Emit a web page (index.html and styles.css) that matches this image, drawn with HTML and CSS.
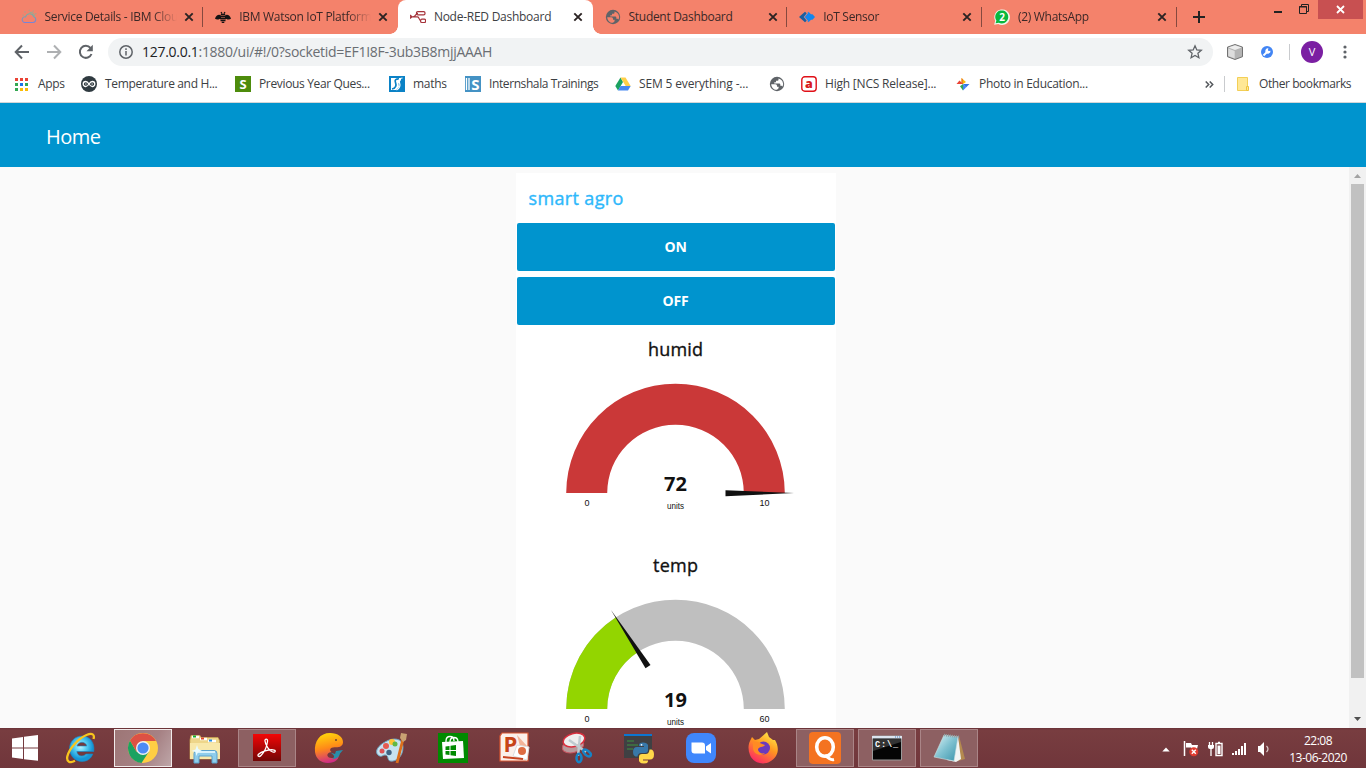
FILE: index.html
```html
<!DOCTYPE html>
<html lang="en">
<head>
<meta charset="utf-8">
<title>Node-RED Dashboard</title>
<link rel="stylesheet" href="styles.css">
</head>
<body>
<svg class="defs" width="0" height="0">
  <defs>
    <symbol id="x" viewBox="0 0 10 10"><path d="M1.3 1.3l7.4 7.4M8.7 1.3L1.3 8.700" stroke="currentColor" stroke-width="1.9" fill="none"/></symbol>
    <symbol id="globe" viewBox="0 0 16 16"><circle cx="8" cy="8" r="7.2" fill="#5f6368"/><path d="M2.200 8.300h4.300q1.500 0 1.500 1.500v1h1.600v1.400l-1.600 1.500q-1.200.3-2.500-.2C3.500 12.500 2.200 10.500 2.200 8.300zM9.500 2.400v1.400q0 1-1 1H7v1.500H5.300v1.200h5q1 0 1 1v1.300h1.300l1 .7q1.200-3-.3-5.500-1.300-2.100-3.800-2.600z" fill="var(--hole)"/></symbol>
  </defs>
</svg>
<div class="screen">
  <div class="tabs">
    <div class="tab">
      <svg class="fav" viewBox="0 0 16 16" fill="none" stroke-width="1.1"><defs><linearGradient id="cl" x1="0" y1="0" x2="0" y2="1"><stop offset="0" stop-color="#7bb09d"/><stop offset="1" stop-color="#7883d6"/></linearGradient></defs><path d="M3.500 13.500h8.500a3 3 0 0 0 .8-5.800A4.300 4.300 0 0 0 4.600 7.900a2.800 2.800 0 0 0-1.100 5.600z" stroke="url(#cl)"/><path d="M8.500 3.500a4 4 0 0 1 5 4.500M8 .8l.4 1.400M3.500 2.500l1 1M12.500 1.500l-.7 1.200M15.400 4.500l-1.300.6M1.500 6l1.400.2" stroke="#a3a58c"/></svg>
      <span class="title t1">Service Details - IBM Clou</span><svg class="close"><use href="#x"/></svg>
    </div>
    <div class="tab">
      <svg class="fav" viewBox="0 0 16 16"><path d="M6 6.800C4.500 4.800 1 6 0 9.800c1.800 1.200 4.800.8 6-.8zM10 6.800c1.500-2 5-.8 6 3-1.800 1.200-4.800.8-6-.8z" fill="#151313"/><path d="M6 3l1 1.500M10 3L9 4.500M5.800 5.500h4.400M5.200 7.500h5.600M5 9.500h6M5.500 11.500h5M6.700 13.300h2.600" stroke="#151313" stroke-width="1.300"/></svg>
      <span class="title t2">IBM Watson IoT Platform</span><svg class="close"><use href="#x"/></svg>
    </div>
    <div class="tab active">
      <svg class="fav" viewBox="0 0 16 16" fill="none" stroke="#a6323a" stroke-width="1.200"><path d="M0 7.800h3c3 0 2.500-3.500 5-3.500M0 6l2 1.800L0 9.600M3 7.800h4.500c2 0 1.500 4.100 3.500 4.100"/><rect x="6.500" y="2.600" width="8.500" height="3.300" rx="1.300"/><rect x="10.600" y="10.200" width="5" height="3.300" rx="1.300"/></svg>
      <span class="title t3">Node-RED Dashboard</span><svg class="close"><use href="#x"/></svg>
    </div>
    <div class="tab">
      <svg class="fav hole-tab"><use href="#globe"/></svg>
      <span class="title t4">Student Dashboard</span><svg class="close"><use href="#x"/></svg>
    </div>
    <div class="tab">
      <svg class="fav" viewBox="0 0 16 16"><path d="M0 8l6-5.300 1.700 1.600L5 8l2.700 3.700L6 13.300z" fill="#1d5e9e"/><path d="M9.500 2.700l2.500 2.500h1.500L16 8l-2.500 2.800H12l-2.500 2.500L4.500 8z" fill="#1386ee"/><path d="M9 3.800L5.300 8 9 12.200" stroke="#f4826b" stroke-width=".8" fill="none"/></svg>
      <span class="title t5">IoT Sensor</span><svg class="close"><use href="#x"/></svg>
    </div>
    <div class="tab">
      <svg class="fav" viewBox="0 0 16 16"><path d="M.2 15.800l1-4A7.800 7.800 0 1 1 4.300 15z" fill="#eef8ee"/><path d="M1.600 14.300l.8-2.700A6.500 6.500 0 1 1 4.800 13.700z" fill="#08b83d"/><text x="8" y="11.700" class="glyph" font-size="10" fill="#fff">2</text></svg>
      <span class="title t6">(2) WhatsApp</span><svg class="close"><use href="#x"/></svg>
    </div>
    <svg class="plus" viewBox="0 0 12 12"><path d="M6 0v12M0 6h12" stroke="#232323" stroke-width="2"/></svg>
    <div class="window-controls">
      <svg width="8" height="13"><path d="M0 12h8" stroke="#222" stroke-width="2"/></svg>
      <svg width="10" height="10" fill="none" stroke="#222"><path d="M.5 2.500h7v7h-7zM0 3h8M2.500 2V.5h7v7H8"/></svg>
      <div class="window-close"><svg width="9" height="9"><path d="M1 1l7 7M8 1L1 8" stroke="#fff" stroke-width="1.800"/></svg></div>
    </div>
  </div>

  <div class="toolbar">
    <svg class="nav" viewBox="0 0 16 16"><path d="M15 8H2M8 1.500L1.700 8 8 14.500" class="line"/></svg>
    <svg class="nav dim" viewBox="0 0 16 16"><path d="M1 8h13M8 1.500L14.300 8 8 14.500" class="line"/></svg>
    <svg class="nav" viewBox="0 0 16 16"><path d="M13.500 10A6 6 0 1 1 12.500 4" class="line"/><path d="M14.800.8v6.400H8.500z" fill="#5f6368"/></svg>
    <div class="omnibox">
      <svg width="14" height="14" viewBox="0 0 14 14"><circle cx="7" cy="7" r="6.200" fill="none" stroke="#5f6368" stroke-width="1.500"/><path d="M7 6v4.500M7 3.300v1.600" stroke="#5f6368" stroke-width="1.500"/></svg>
      <span class="url"><b>127.0.0.1</b>:1880/ui/#!/0?socketid=EF1I8F-3ub3B8mjjAAAH</span>
      <svg class="star" viewBox="0 0 16 16"><path d="M8 1.800l1.800 4.100 4.500.4-3.400 3 1 4.400L8 11.400l-3.900 2.300 1-4.400-3.400-3 4.500-.4z" fill="none" stroke="#5f6368" stroke-width="1.300"/></svg>
    </div>
    <svg class="ext-cube" viewBox="0 0 16 16"><path d="M8 .5l7.500 2.600v9.600L8 15.500.5 12.700V3.100z" fill="#b4b4b4" stroke="#666" stroke-width=".9"/><path d="M1.300 3.500L8 1.200l6.700 2.300L8 6z" fill="#eee"/><path d="M1.300 4.500L7.700 7v7.500l-6.400-2.400z" fill="#ddd"/></svg>
    <svg class="ext-wrench" viewBox="0 0 12 12"><circle cx="6" cy="6" r="6" fill="#4285f4"/><path d="M2.500 9.500l3-3" stroke="#fff" stroke-width="2"/><path d="M9.500 4.700L7.800 5 6.900 4.200l.5-1.900A2.700 2.700 0 0 0 4.700 6.400 2.600 2.600 0 0 0 9.500 4.700z" fill="#fff"/></svg>
    <i class="rule"></i>
    <span class="avatar">V</span>
    <svg class="kebab" viewBox="0 0 4 14" fill="#5f6368"><circle cx="2" cy="2" r="1.600"/><circle cx="2" cy="7" r="1.600"/><circle cx="2" cy="12" r="1.600"/></svg>
  </div>

  <div class="bookmarks">
    <div class="bm apps"><svg width="13" height="13" viewBox="0 0 13 13"><path d="M0 0h3v3H0zM5 0h3v3H5zM10 0h3v3h-3z" fill="#ea4335"/><path d="M0 5h3v3H0zM0 10h3v3H0z" fill="#34a853"/><path d="M5 5h3v3H5z" fill="#1a73e8"/><path d="M5 10h3v3H5zM10 10h3v3h-3z" fill="#fbbc05"/><path d="M10 5h3v3h-3z" fill="#34a853"/></svg><span class="b1">Apps</span></div>
    <div class="bm"><svg class="fav" viewBox="0 0 16 16"><circle cx="8" cy="8" r="8" fill="#2f3a40"/><path d="M8 8C6.500 5.700 5.800 5.500 4.700 5.500a2.500 2.500 0 0 0 0 5C5.800 10.500 6.500 10.300 8 8s2.200-2.500 3.300-2.500a2.500 2.500 0 0 1 0 5C10.200 10.500 9.500 10.300 8 8z" fill="none" stroke="#fff" stroke-width="1.300"/><path d="M4 8h1.600M10.400 8H12" stroke="#fff" stroke-width=".8"/></svg><span class="b2">Temperature and H...</span></div>
    <div class="bm"><svg class="fav" viewBox="0 0 16 16"><path d="M0 0h16v16H0z" fill="#4d8c0c"/><text x="8" y="12.800" class="glyph" font-size="13" fill="#fff">S</text></svg><span class="b3">Previous Year Ques...</span></div>
    <div class="bm"><svg class="fav" viewBox="0 0 16 16"><path d="M0 0h16v16H0z" fill="#0b82c6"/><path d="M2 2h10v2L9.500 7.500 10 11 7 14H2z" fill="#fff"/><path d="M10 2.800C6.500 2.800 5.500 4 6.500 6.500S7 12.500 3 13" stroke="#0b82c6" stroke-width="1.700" fill="none"/><path d="M13.500 2c-3.500.2-4 1.500-3 4.500s0 6-3 7.500" stroke="#fff" stroke-width="1.200" fill="none"/></svg><span class="b4">maths</span></div>
    <div class="bm"><svg class="fav" viewBox="0 0 16 16"><path d="M0 0h16v16H0z" fill="#4492c4"/><path d="M1.500 2v12M4 2v12" stroke="#fff" stroke-width="1.300"/><text x="10.300" y="13.500" class="glyph" font-size="15" fill="#fff">S</text></svg><span class="b5">Internshala Trainings</span></div>
    <div class="bm"><svg class="fav" viewBox="0 0 16 16"><path d="M5.500 1.500L8 6 3 14.500.3 10z" fill="#1aa260"/><path d="M5.500 1.500h5l5.200 8.500h-5z" fill="#ffcf48"/><path d="M5.500 10h10.200L13 14.500H3z" fill="#4688f1"/></svg><span class="b6">SEM 5 everything -...</span></div>
    <div class="bm"><svg class="fav hole-bar"><use href="#globe"/></svg></div>
    <div class="bm"><svg class="fav" viewBox="0 0 16 16"><rect x=".8" y=".8" width="14.400" height="14.400" rx="3" fill="#fff" stroke="#e01018" stroke-width="1.400"/><text x="8" y="12" class="glyph heavy" font-size="12.500" fill="#d71920">a</text></svg><span class="b7">High [NCS Release]...</span></div>
    <div class="bm"><svg class="fav" viewBox="0 0 16 16"><path d="M6.500 8V2l4.500 4-3 2z" fill="#fbbc05"/><path d="M6.500 2v6H8V3.300z" fill="#ee7f28"/><path d="M1.500 8l3-3.500L8 8z" fill="#ea4335"/><path d="M8 8h6.500L11 11.500z" fill="#3876e5"/><path d="M5 10.300L8 8v6.500z" fill="#34a853"/><path d="M8 8l3 3.500-3 3z" fill="#4285f4"/></svg><span class="b8">Photo in Education...</span></div>
    <svg class="more" viewBox="0 0 9 7"><path d="M.7.5l3 3-3 3M4.700.5l3 3-3 3" fill="none" stroke="#54585c" stroke-width="1.500"/></svg>
    <i class="rule"></i>
    <div class="bm folder"><svg width="12" height="15" viewBox="0 0 12 15"><path d="M.5.500h10v13H.5z" fill="#ffe896" stroke="#f3cf56"/><path d="M9.500 9.500h2v4h-2z" fill="#ffe896" stroke="#eec43e"/></svg><span class="b9">Other bookmarks</span></div>
  </div>

  <header class="appbar">Home</header>
  <main class="viewport">
    <section class="card">
      <h2>smart agro</h2>
      <button>ON</button>
      <button>OFF</button>
      <svg class="gauge" viewBox="0 0 320 216">
        <text x="159.500" y="25" class="g-title" textLength="55">humid</text>
        <path d="M50.200 162a109.300 109.300 0 0 1 218.600 0h-41a68.300 68.300 0 0 0-136.600 0z" fill="#ca3838"/>
        <path d="M209.500 159.200l68.500 2.800-68.500 3.300z" fill="#111"/>
        <text x="159.500" y="160" class="g-value">72</text>
        <text x="159.500" y="178" class="g-small" textLength="17" lengthAdjust="spacingAndGlyphs">units</text>
        <text x="71" y="175" class="g-small">0</text><text x="248.500" y="175" class="g-ten">10</text>
      </svg>
      <svg class="gauge" viewBox="0 0 320 216">
        <text x="159.500" y="25" class="g-title" textLength="45">temp</text>
        <path d="M50.200 162a109.300 109.300 0 0 1 218.600 0h-41a68.300 68.300 0 0 0-136.600 0z" fill="#bfbfbf"/>
        <path d="M50.200 162A109.300 109.300 0 0 1 99.970 70.330L122.300 104.720A68.300 68.300 0 0 0 91.200 162z" fill="#93d500"/>
        <path d="M95 63l39.500 55-5 3.200z" fill="#111"/>
        <text x="159.500" y="160" class="g-value">19</text>
        <text x="159.500" y="178" class="g-small" textLength="17" lengthAdjust="spacingAndGlyphs">units</text>
        <text x="71" y="175" class="g-small">0</text><text x="248.500" y="175" class="g-ten">60</text>
      </svg>
    </section>
    <div class="scrollbar">
      <svg viewBox="0 0 17 17"><path d="M5 11l3.500-4 3.500 4z" fill="#a3a3a3"/></svg>
      <div class="thumb"></div>
      <svg viewBox="0 0 17 17"><path d="M5 6l3.500 4L12 6z" fill="#505050"/></svg>
    </div>
  </main>

  <footer class="taskbar">
    <div class="start"><svg width="28" height="28" viewBox="0 0 28 28"><path d="M1 4.500l11-1.500v10.500H1zM13 2.800L27 1v12.500H13zM1 14.500h11V25L1 23.600zM13 14.500h14v12.300l-14-1.600z" fill="#fff"/></svg></div>
    <div class="task"><svg viewBox="0 0 32 32"><defs><radialGradient id="ie" cx=".45" cy=".4"><stop offset="0" stop-color="#c4f6ff"/><stop offset=".5" stop-color="#56cdf3"/><stop offset="1" stop-color="#1595d5"/></radialGradient></defs><path fill-rule="evenodd" d="M17 4c-7 0-12.500 5.500-12.500 12.500S10 29.500 17 29.500c5 0 9-2.700 10.800-7.500h-7c-2 3-8.400 2.800-9-2.500h17C30 10 24.500 4 17 4zM12 14c1.500-5 8.500-5 9.800 0z" fill="url(#ie)" stroke="#1687c4" stroke-width=".6"/><path d="M28.500 7C30 2.500 27 .5 22 2.800 13 6.500 4 17 2.300 24.500 1.300 30 5 31.500 10 28.800" fill="none" stroke="#f8c51d" stroke-width="2.300"/></svg></div>
    <div class="task current"><svg viewBox="0 0 32 32"><circle cx="16" cy="16" r="15" fill="#ffce44"/><path d="M3 8.500A15 15 0 0 0 14.500 31L22 19.500 16 16 9.500 19.800z" fill="#1ca261"/><path d="M3 8.500l6.500 11.300L16 9h13a15 15 0 0 0-26-.5z" fill="#dd5144"/><circle cx="16" cy="16" r="7" fill="#f1f1f1"/><circle cx="16" cy="16" r="5.600" fill="#4c8bf5"/></svg></div>
    <div class="task"><svg viewBox="0 0 32 32"><path d="M2 3.500h9l1 2h17l1.500 3V27H1V8z" fill="#eed68a" stroke="#c9a650" stroke-width=".7"/><path d="M3 5h7M11 7h7M19 9h8" stroke="#fff" stroke-width="2.500"/><path d="M4 4.500h3" stroke="#15b12d" stroke-width="2"/><path d="M12 6.500h3" stroke="#e04a2c" stroke-width="2"/><path d="M20 8.500h3" stroke="#278ee0" stroke-width="2"/><path d="M1 11h30v16H1z" fill="#f8e8aa"/><path d="M5 31V21.500q0-3 3-3h17q3 0 3 3V31h-5v-7H10v7z" fill="#8fcdeb" stroke="#5ba2cd"/><path d="M7 20h19" stroke="#d7f2fc" stroke-width="2"/><path d="M8 13l1.300 4L13 19l-4 1-1.500 4-1-4-4-1 4-1.500z" fill="#e8fbff"/></svg></div>
    <div class="task running"><svg viewBox="0 0 32 32"><defs><linearGradient id="ac" x2="0" y2="1"><stop stop-color="#f30606"/><stop offset="1" stop-color="#720606"/></linearGradient></defs><path d="M2 2h28v27H2z" fill="url(#ac)"/><path d="M14 9c-.5-2.500 3-2.800 2.500.5-.7 5-3.500 11-6.500 14-2 2-4 .5-2.500-1.200 3-3 10-4.800 14.500-4.500 3.500.3 2.500 3-.3 2.200C18 19 14.500 13 14 9z" fill="none" stroke="#fff" stroke-width="1.300"/></svg></div>
    <div class="task"><svg viewBox="0 0 32 32"><defs><linearGradient id="py" x1=".3" x2=".5" y2="1"><stop stop-color="#ffd90a"/><stop offset=".5" stop-color="#ff8a18"/><stop offset="1" stop-color="#cc2789"/></linearGradient></defs><path d="M2 20C1 9 7 1 17 1c8 0 13 4 13 9 0 4-3 5.500-8 5.300-5-.2-6 3-3.500 4.700-6 1-5 6 0 6 4 0 6-2 7-4.500C27 27 22 31 15 31 8 31 3 27 2 20z" fill="url(#py)"/><path d="M16 20l6 2 1-3 7-1-3 3.500c-1 4-5 6.500-8 5 3-.5 3.500-3.500-3-6.500z" fill="#298faa"/><circle cx="23" cy="8" r="1" fill="#6c4430"/></svg></div>
    <div class="task"><svg viewBox="0 0 32 32"><path d="M10 10C18 5 28 6 28 15c0 10-7 15-13 14-3-1-1-6-5-6-3 0-3 3-7 0-4-4 1-10 7-13z" fill="#c7e3f1" stroke="#6ca1bd"/><circle cx="11" cy="14" r="3" fill="#e55b50"/><circle cx="17" cy="10" r="3" fill="#ffc335"/><circle cx="7" cy="19" r="2.500" fill="#e05255"/><circle cx="20" cy="12" r="2.500" fill="#60b846"/><circle cx="14" cy="20.500" r="2.700" fill="#406384"/><path d="M28 7L22 31" stroke="#dc6e1b" stroke-width="2.800"/><path d="M25 6l1-5 6 1-1 6-3 2z" fill="#c9a273"/></svg></div>
    <div class="task"><svg viewBox="0 0 32 32"><path d="M1 1h30v30H1z" fill="#008a00"/><path d="M5 10l21-1 1 17-21 1z" fill="#fff"/><path d="M9 13V9c0-6 8-6 8 0M13 10c0-6 8-6 8 0" stroke="#fff" fill="none" stroke-width="1.300"/><path d="M8.500 14.500l4-.5v4h-4zM13.500 13.800l5.500-.8v5h-5.500zM8.500 19h4v4l-4-.5zM13.500 19H19v5l-5.500-.8z" fill="#008a00"/></svg></div>
    <div class="task"><svg viewBox="0 0 32 32"><path d="M3 1h26v28H1V4z" fill="#fbf0ea" stroke="#d9552f" stroke-width="1.200"/><path d="M18 3l10 11h-7z" fill="#f3b499"/><path d="M18 13l12 2-2 13-14-4z" fill="#fff" stroke="#ddd"/><circle cx="23" cy="19" r="4" fill="#dd6c42"/><path d="M4 25l20 2" stroke="#c84420" stroke-width="2"/><text x="11.500" y="20" class="glyph" font-size="22" fill="#c74417">P</text></svg></div>
    <div class="task"><svg viewBox="0 0 32 32"><ellipse cx="12" cy="14" rx="11" ry="6.500" fill="#b99a9c" stroke="#c85863" transform="rotate(-15 12 14)"/><ellipse cx="13" cy="8" rx="11" ry="6.500" fill="#eee" stroke="#d92e3d" stroke-width="1.500" transform="rotate(-15 13 8)"/><path d="M8 8l17 12M19 4l-2 20" stroke="#bfcbd0" stroke-width="2.500"/><ellipse cx="18" cy="26" rx="2.500" ry="4.200" fill="none" stroke="#1683c5" stroke-width="2.500"/><ellipse cx="26" cy="21" rx="4.500" ry="2.300" transform="rotate(40 26 21)" fill="none" stroke="#1683c5" stroke-width="2.500"/></svg></div>
    <div class="task"><svg viewBox="0 0 32 32"><path d="M1 2h28v24H1z" fill="#3f4043"/><path d="M1 2h28v2H1z" fill="#0b76d1"/><path d="M4 9h7M4 13h11M4 17h6" stroke="#3e9340" stroke-width="1.200"/><path d="M16 13q0-2.500 4-2.500t5 2.500v5q0 3-3 3h-4q-3 0-3.500 3.500h-2q-2.500-1-2.500-4.500 0-5 4-5h7v-1h-5z" fill="#3878a9"/><path d="M25 29q0 2.500-4 2.500T16 29v-4q0-3 3-3h4q3 0 3.500-4.500h2q2.500 1 2.500 5 0 5-4 5h-7v1h5z" fill="#ffd84a"/><circle cx="18.500" cy="12.800" r=".9" fill="#fff"/></svg></div>
    <div class="task"><svg viewBox="0 0 32 32"><rect x="1" y="1" width="30" height="30" rx="8" fill="#4087fc"/><path d="M6.500 10.500H17q3 0 3 3v8H9.500q-3 0-3-3zM21 14.500l5-3.500v10.500l-5-3.500z" fill="#fff"/></svg></div>
    <div class="task"><svg viewBox="0 0 32 32"><defs><linearGradient id="ff" x1=".8" x2=".25" y2="1"><stop stop-color="#fff04b"/><stop offset=".45" stop-color="#ff9620"/><stop offset="1" stop-color="#fd2368"/></linearGradient></defs><path d="M3 9l2-4 3 3 4-1 8-7 2 5 4 3 2 0c3 5 4 11 1 16-7 11-22 9-26-1C1 18 1 13 3 9z" fill="url(#ff)"/><circle cx="16.500" cy="16" r="6.500" fill="#6c39bc"/><path d="M6 10c4-1 8 2 12 3-2 3-7 1-7 5 1 3 4 4 7 3-4 4-12 1-12-5z" fill="#ff8b24"/></svg></div>
    <div class="task running"><svg viewBox="0 0 32 32"><rect width="32" height="32" rx="4" fill="#f47321"/><ellipse cx="16" cy="15" rx="8.300" ry="9.300" fill="none" stroke="#fff" stroke-width="3.600"/><path d="M16 23q5 5.500 9 4.500" fill="none" stroke="#fff" stroke-width="3"/></svg></div>
    <div class="task running"><svg viewBox="0 0 32 32"><path d="M1.500 4h29v24h-29z" fill="#050505" stroke="#9a9a9a"/><path d="M1 4h30v2.500H1z" fill="#dce5ef"/><path d="M24 5h1M26 5h1M28 5h1" stroke="#4680c0"/><path d="M2 7h28v3L2 19z" fill="#333"/><text x="4" y="14.500" class="console" textLength="23">C:\_</text></svg></div>
    <div class="task running"><svg viewBox="0 0 32 32"><defs><linearGradient id="np" x2="1" y2="1"><stop stop-color="#e0f6f8"/><stop offset=".5" stop-color="#7fc1d0"/><stop offset="1" stop-color="#3994ab"/></linearGradient></defs><path d="M26 4l6 23-7 2z" fill="#b48a4f"/><path d="M25 4l3 23-5 3-9-2z" fill="#f1f5f4"/><path d="M11 3l14 2-4 24L1 25z" fill="url(#np)" stroke="#ccdfe0" stroke-width=".6"/><path d="M11 3l15 2" stroke="#8fa2a4" stroke-width="2.500" stroke-dasharray="1 1"/></svg></div>
    <div class="tray">
      <svg width="8" height="5"><path d="M.3 4.500L4 .5l3.700 4z" fill="#fff"/></svg>
      <svg width="16" height="16" viewBox="0 0 16 16"><path d="M1.500 0v15" stroke="#fff" stroke-width="1.500"/><path d="M3 2h5l1 2h6l-1 4H9L8 6.500H3z" fill="#fff"/><circle cx="10.800" cy="10.800" r="4.500" fill="#df3b2f"/><path d="M8.800 8.800l4 4M12.800 8.800l-4 4" stroke="#fff" stroke-width="1.400"/></svg>
      <svg width="15" height="16" viewBox="0 0 15 16"><path d="M1.500 1v3M4.500 1v3M3 7v8" stroke="#fff" stroke-width="1.300"/><path d="M0 4h6v2q0 2-2 2H2Q0 8 0 6z" fill="#fff"/><path d="M8 2.500h6v12H8zM10 1.500h2" stroke="#fff" fill="none" stroke-width="1.400"/><path d="M9.500 4.500h3v8.500h-3z" fill="#fff"/></svg>
      <svg width="15" height="12" viewBox="0 0 15 12"><path d="M0 10h2v2H0zM3 8h2v4H3zM6 6h2v6H6zM9 3h2v9H9zM12 0h2v12h-2z" fill="#fff"/></svg>
      <svg width="13" height="14" viewBox="0 0 13 14"><path d="M1 4h2l4-4v14l-4-4H1z" fill="#fff"/><path d="M9.500 4q3 3 0 6" fill="none" stroke="#ddcdce" stroke-width="1.200"/></svg>
    </div>
    <div class="clock"><div class="time">22:08</div><div class="date">13-06-2020</div></div>
  </footer>
</div>
</body>
</html>
```

FILE: styles.css
```css
* { box-sizing: border-box; }
html, body { margin: 0; width: 1366px; height: 768px; overflow: hidden; }
body { font-family: "Open Sans", "Noto Sans", sans-serif; font-size: 12px; color: #3c4043; }
svg { display: block; flex: none; }
.defs { position: absolute; }
.glyph { font-family: "Open Sans", sans-serif; font-weight: 700; text-anchor: middle; }
.heavy { font-weight: 800; }
.console { font: 700 8.500px "Liberation Mono", monospace; fill: #fff; }
.screen { width: 1366px; height: 768px; display: flex; flex-direction: column; overflow: hidden; background: #fff; }

.title, .bm span { letter-spacing: -.3px; }
.title.t3 { letter-spacing: -.26px; }
.bm .b2, .bm .b3 { letter-spacing: -.35px; }
.bm .b5 { letter-spacing: -.4px; }
.bm .b6 { letter-spacing: -.15px; }
.bm .b7 { letter-spacing: -.2px; }
.bm .b9 { letter-spacing: -.43px; }

.tabs { height: 34px; flex: none; display: flex; align-items: center; background: #f4826b; padding-left: 8.500px; color: #3b2827; }
.tab { width: 194.700px; height: 34px; flex: none; display: flex; align-items: center; padding: 0 9px 0 12px; background: linear-gradient(#86493f, #86493f) right 0 top 7px / 1px 20px no-repeat; }
.tab.active { background: #fff; border-radius: 8px 8px 0 0; color: #3c4043; position: relative; }
.tab.active::before, .tab.active::after { content: ""; position: absolute; bottom: 0; width: 8px; height: 8px; }
.tab:has(+ .active) { background: none; }
.tab.active::before { left: -8px; background: radial-gradient(circle at 0 0, transparent 7.500px, #fff 8px); }
.tab.active::after { right: -8px; background: radial-gradient(circle at 100% 0, transparent 7.500px, #fff 8px); }
.fav { width: 16px; height: 16px; }
.hole-tab { --hole: #f4826b; }
.hole-bar { --hole: #fff; }
.title { width: 132px; margin-left: 8px; white-space: nowrap; overflow: hidden; mask-image: linear-gradient(90deg, #000 108px, transparent 132px); line-height: 18px; }
.active .title, .t4 { mask-image: none; }
.close { width: 10px; height: 10px; margin-left: 7px; color: #2b2323; }
.plus { width: 12px; height: 12px; margin-left: 16.500px; }
.window-controls { margin-left: auto; align-self: flex-start; display: flex; align-items: flex-start; }
.window-controls > svg:nth-child(1) { margin: 0 17px 0 0; }
.window-controls > svg:nth-child(2) { margin: 4px 9px 0 0; }
.window-close { width: 45px; height: 19px; margin-right: 3px; background: #c85051; display: grid; place-items: center; }

.toolbar { height: 36px; flex: none; display: flex; align-items: center; padding-left: 14px; }
.nav { width: 16px; height: 16px; margin-right: 16px; }
.line { fill: none; stroke: #5f6368; stroke-width: 2; }
.dim { opacity: .5; }
.omnibox { width: 1105px; height: 28px; margin-left: -2px; border-radius: 14px; background: #f1f3f4; display: flex; align-items: center; padding: 0 10px 0 11px; }
.url { margin-left: 9px; font-size: 14px; letter-spacing: -.285px; color: #6a6e73; line-height: 20px; white-space: nowrap; }
.url b { font-weight: 400; color: #202124; }
.star { width: 16px; height: 16px; margin-left: auto; }
.ext-cube { width: 16px; height: 16px; margin-left: 14px; }
.ext-wrench { width: 12px; height: 12px; margin-left: 18px; }
.rule { width: 1px; height: 16px; background: #c9cbce; flex: none; }
.toolbar .rule { margin: 0 11px 0 16px; }
.avatar { width: 22px; height: 22px; border-radius: 50%; background: #7b1fa2; color: #fff; font-size: 11px; line-height: 22px; text-align: center; }
.kebab { width: 4px; height: 14px; margin-left: 20px; }

.bookmarks { height: 33px; flex: none; display: grid; grid-template-columns: 66px 154px 154px 76px 150px 154px 32px 154px 250px 19px 13px 1fr; padding: 0 0 4px 15px; align-items: center; border-bottom: 1px solid #d3d6d8; }
.bm { display: flex; align-items: center; gap: 8px; white-space: nowrap; line-height: 18px; }
.apps { gap: 10px; }
.folder { gap: 10px; }
.more { width: 9px; height: 7px; }

.appbar { height: 64px; flex: none; background: #0094ce; color: #fff; font-size: 20px; letter-spacing: -.5px; line-height: 68px; padding-left: 46px; }
.viewport { height: 561px; flex: none; background: #fafafa; display: grid; grid-template-columns: 320px 17px; justify-content: end; column-gap: 513px; overflow: hidden; }
.card { margin-top: 6px; background: #fff; padding: 0 1px; height: 600px; }
.card h2 { margin: 0; height: 50px; padding: 0 11.500px; font-size: 18px; font-weight: 400; line-height: 50px; letter-spacing: .35px; color: #2eb8fb; -webkit-text-stroke: .4px #2eb8fb; }
.card button { display: block; width: 318px; height: 48px; margin: 0 0 6px; border: 0; border-radius: 2px; background: #0094ce; color: #fff; font: 700 14px/48px "Open Sans", sans-serif; letter-spacing: -.2px; padding: 0 1px 0 0; }
.gauge { width: 320px; height: 216px; margin-left: -1px; }
.gauge text { text-anchor: middle; fill: #111; }
.g-title { font-size: 18px; stroke: #111; stroke-width: .35px; }
.g-value { font-size: 20px; font-weight: 700; }
.gauge .g-small, .gauge .g-ten { font-family: "Liberation Sans", Arial, sans-serif; font-size: 9px; }
.scrollbar { height: 561px; background: #f1f1f1; display: flex; flex-direction: column; justify-content: space-between; }
.scrollbar svg { width: 17px; height: 17px; }
.thumb { height: 494px; width: 13px; margin: 0 auto auto; background: #c1c1c1; }

.taskbar { height: 40px; flex: none; background: linear-gradient(#693237 0, #783d40 2px, #70363b 100%); display: flex; gap: 4px; color: #fff; }
.start { width: 48px; display: flex; align-items: center; padding-left: 11px; }
.task { width: 58px; height: 38px; margin-top: 1px; display: grid; place-items: center; flex: none; }
.task > svg { width: 32px; height: 32px; }
.running { background: #8d6062; border: 1px solid #aa8587; }
.current { background: linear-gradient(120deg, #9d7676, #a68184 60%, #bea6a8); border: 1px solid #f1eaea; }
.tray { margin-left: auto; display: flex; align-items: center; padding-top: 2px; }
.tray svg:nth-child(2) { margin-left: 13px; }
.tray svg:nth-child(3) { margin-left: 9px; }
.tray svg:nth-child(4) { margin-left: 9px; }
.tray svg:nth-child(5) { margin-left: 10px; }
.clock { width: 82px; margin-right: 7px; margin-left: 3px; text-align: center; line-height: 17px; padding-top: 4px; letter-spacing: -.5px; }
```
